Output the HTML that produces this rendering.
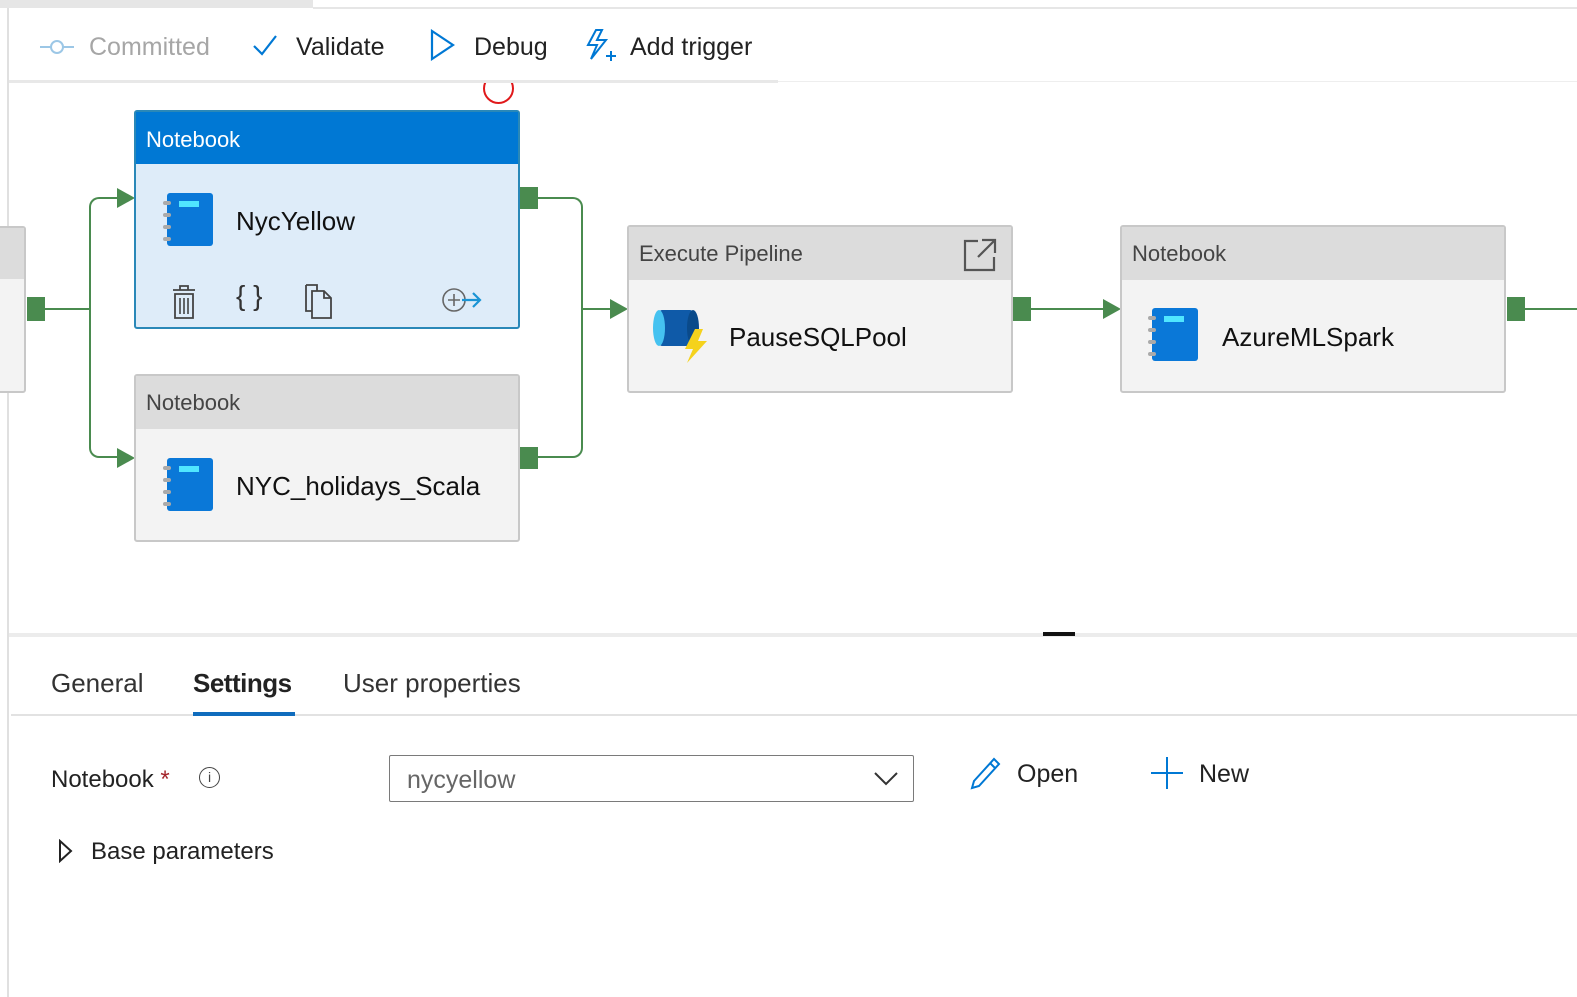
<!DOCTYPE html><html><head><style>
*{margin:0;padding:0;box-sizing:border-box}
body{width:1577px;height:997px;background:#fff;position:relative;overflow:hidden;font-family:"Liberation Sans",sans-serif;color:#222}
.a{position:absolute}
.node{position:absolute;border:2px solid #c8c8c8;border-radius:3px;background:#f3f3f3}
.hd{position:absolute;left:0;right:0;top:0;height:51px;background:#dcdcdc;font-size:22px;color:#444;padding:14px 0 0 10px}
.nm{position:absolute;font-size:26px;color:#111}
.g{position:absolute;background:#4a8b4f}
.ln{position:absolute;border-color:#4a8b4f;border-style:solid;border-width:0}
.tri{position:absolute;width:0;height:0;border-top:10px solid transparent;border-bottom:10px solid transparent;border-left:18px solid #4a8b4f}
</style></head><body>
<div class="a" style="left:0;top:0;width:313px;height:8px;background:#e6e6e6"></div>
<div class="a" style="left:313px;top:7px;width:1264px;height:2px;background:#e6e6e6"></div>
<div class="a" style="left:7px;top:8px;width:2px;height:989px;background:#e0e0e0"></div>
<div class="a" style="left:9px;top:80px;width:769px;height:3px;background:#e8e8e8"></div>
<div class="a" style="left:778px;top:81px;width:799px;height:1px;background:#eee"></div>
<!-- toolbar -->
<svg class="a" style="left:40px;top:37px" width="34" height="20"><line x1="0" y1="10" x2="34" y2="10" stroke="#9cc7e6" stroke-width="2"/><circle cx="17" cy="10" r="6" fill="#fff" stroke="#9cc7e6" stroke-width="2"/></svg>
<div class="a" style="left:89px;top:33px;font-size:25px;color:#a6a6a6">Committed</div>
<svg class="a" style="left:252px;top:34px" width="26" height="22"><path d="M2 12 L10 20 L24 2" fill="none" stroke="#0078d4" stroke-width="2.2"/></svg>
<div class="a" style="left:296px;top:33px;font-size:25px">Validate</div>
<svg class="a" style="left:430px;top:29px" width="26" height="32"><path d="M2 2 L23 16 L2 30 Z" fill="none" stroke="#0078d4" stroke-width="2.2"/></svg>
<div class="a" style="left:474px;top:33px;font-size:25px">Debug</div>
<svg class="a" style="left:584px;top:28px" width="34" height="34"><path d="M12 2 L4 17 L13 17 L7 31 L22 12 L13 12 L18 2 Z" fill="none" stroke="#0078d4" stroke-width="2"/><path d="M22 28 h10 M27 23 v10" stroke="#0078d4" stroke-width="2"/></svg>
<div class="a" style="left:630px;top:33px;font-size:25px">Add trigger</div>
<!-- red circle -->
<div class="a" style="left:483px;top:73px;width:31px;height:31px;border:2px solid #e0191b;border-radius:50%;clip-path:inset(10px 0 0 0)"></div>
<!-- left partial node -->
<div class="node" style="left:-10px;top:226px;width:36px;height:167px"><div class="hd" style="padding:0"></div></div>
<!-- connectors -->
<div class="g" style="left:27px;top:297px;width:18px;height:24px"></div>
<div class="ln" style="left:45px;top:308px;width:45px;border-top-width:2px"></div>
<div class="ln" style="left:89px;top:197px;width:30px;height:112px;border-left-width:2px;border-top-width:2px;border-radius:10px 0 0 0"></div>
<div class="ln" style="left:89px;top:308px;width:30px;height:150px;border-left-width:2px;border-bottom-width:2px;border-radius:0 0 0 10px"></div>
<div class="tri" style="left:117px;top:188px"></div>
<div class="tri" style="left:117px;top:448px"></div>
<div class="g" style="left:520px;top:187px;width:18px;height:22px"></div>
<div class="g" style="left:520px;top:447px;width:18px;height:22px"></div>
<div class="ln" style="left:538px;top:197px;width:45px;height:112px;border-right-width:2px;border-top-width:2px;border-radius:0 10px 0 0"></div>
<div class="ln" style="left:538px;top:308px;width:45px;height:150px;border-right-width:2px;border-bottom-width:2px;border-radius:0 0 10px 0"></div>
<div class="ln" style="left:582px;top:308px;width:30px;border-top-width:2px"></div>
<div class="tri" style="left:610px;top:299px"></div>
<div class="g" style="left:1013px;top:297px;width:18px;height:24px"></div>
<div class="ln" style="left:1031px;top:308px;width:75px;border-top-width:2px"></div>
<div class="tri" style="left:1103px;top:299px"></div>
<div class="g" style="left:1507px;top:297px;width:18px;height:24px"></div>
<div class="ln" style="left:1525px;top:308px;width:52px;border-top-width:2px"></div>
<!-- node1 selected -->
<div class="node" style="left:134px;top:110px;width:386px;height:219px;background:#deecf9;border-color:#2a88b8">
<div class="hd" style="background:#0078d4;color:#fff;height:52px;padding-top:15px">Notebook</div>
<div class="nm" style="left:100px;top:94px">NycYellow</div>
<svg class="a" style="left:32px;top:172px" width="32" height="36" viewBox="0 0 32 36"><path d="M5 6 h22 M12 6 v-4 h8 v4 M7 10 h18 v24 h-18 z" fill="none" stroke="#444" stroke-width="1.8"/><path d="M12 14 v16 M16 14 v16 M20 14 v16" fill="none" stroke="#444" stroke-width="1.6"/></svg>
<div class="a" style="left:100px;top:168px;font-size:28px;color:#333">{ }</div>
<svg class="a" style="left:168px;top:172px" width="32" height="36"><path d="M2 1 h11 v6 M2 1 v26 h6 M8 7 h12 l7 7 v20 h-19 z M20 7 v7 h7" fill="none" stroke="#444" stroke-width="1.8"/></svg>
<svg class="a" style="left:304px;top:174px" width="44" height="28"><circle cx="14" cy="14" r="11" fill="none" stroke="#666" stroke-width="1.6"/><path d="M8 14 h12 M14 8 v12" stroke="#666" stroke-width="1.6"/><path d="M22 14 h18 M33 7 l7 7 l-7 7" fill="none" stroke="#1a94d4" stroke-width="2.2"/></svg>
</div>
<!-- node2 -->
<div class="node" style="left:134px;top:374px;width:386px;height:168px"><div class="hd" style="height:53px">Notebook</div><div class="nm" style="left:100px;top:95px">NYC_holidays_Scala</div></div>
<!-- exec pipeline -->
<div class="node" style="left:627px;top:225px;width:386px;height:168px"><div class="hd" style="height:53px">Execute Pipeline</div><div class="nm" style="left:100px;top:95px">PauseSQLPool</div>
<svg class="a" style="left:333px;top:10px" width="36" height="36"><path d="M16 4 H3 V33 H32 V20 M20 3 H33 V16 M33 3 L16 20" fill="none" stroke="#555" stroke-width="2.2"/></svg>
<svg class="a" style="left:20px;top:80px" width="64" height="56"><rect x="10" y="3" width="34" height="36" rx="3" fill="#0f5aa8"/><ellipse cx="10" cy="21" rx="6" ry="18" fill="#45c2f0"/><ellipse cx="44" cy="21" rx="6" ry="18" fill="#0a4a8a"/><path d="M46 22 L36 42 L44 42 L38 56 L58 34 L49 34 L54 22 Z" fill="#f5d21c"/></svg>
</div>
<!-- node3 -->
<div class="node" style="left:1120px;top:225px;width:386px;height:168px"><div class="hd" style="height:53px">Notebook</div><div class="nm" style="left:100px;top:95px">AzureMLSpark</div></div>
<!-- notebook icons -->
<svg class="a" style="left:160px;top:192px" width="56" height="56"><rect x="7" y="1" width="46" height="53" rx="3" fill="#0a78d8"/><rect x="19" y="9" width="20" height="6" fill="#50e6ff"/><g fill="#aaa"><rect x="3" y="9" width="8" height="4" rx="2"/><rect x="3" y="21" width="8" height="4" rx="2"/><rect x="3" y="33" width="8" height="4" rx="2"/><rect x="3" y="45" width="8" height="4" rx="2"/></g></svg>
<svg class="a" style="left:160px;top:457px" width="56" height="56"><rect x="7" y="1" width="46" height="53" rx="3" fill="#0a78d8"/><rect x="19" y="9" width="20" height="6" fill="#50e6ff"/><g fill="#aaa"><rect x="3" y="9" width="8" height="4" rx="2"/><rect x="3" y="21" width="8" height="4" rx="2"/><rect x="3" y="33" width="8" height="4" rx="2"/><rect x="3" y="45" width="8" height="4" rx="2"/></g></svg>
<svg class="a" style="left:1147px;top:307px" width="56" height="56"><rect x="5" y="1" width="46" height="53" rx="3" fill="#0a78d8"/><rect x="17" y="9" width="20" height="6" fill="#50e6ff"/><g fill="#aaa"><rect x="1" y="9" width="8" height="4" rx="2"/><rect x="1" y="21" width="8" height="4" rx="2"/><rect x="1" y="33" width="8" height="4" rx="2"/><rect x="1" y="45" width="8" height="4" rx="2"/></g></svg>
<!-- splitter -->
<div class="a" style="left:9px;top:633px;width:1568px;height:4px;background:#ececec"></div>
<div class="a" style="left:1043px;top:632px;width:32px;height:4px;background:#111"></div>
<!-- tabs -->
<div class="a" style="left:51px;top:668px;font-size:26px;color:#333">General</div>
<div class="a" style="left:193px;top:668px;font-size:26px;color:#222;font-weight:bold;letter-spacing:-0.5px">Settings</div>
<div class="a" style="left:343px;top:668px;font-size:26px;color:#333">User properties</div>
<div class="a" style="left:11px;top:714px;width:1566px;height:2px;background:#e2e2e2"></div>
<div class="a" style="left:193px;top:712px;width:102px;height:4px;background:#0f6cbd"></div>
<!-- form -->
<div class="a" style="left:51px;top:766px;font-size:24px;color:#222">Notebook <span style="color:#a4262c">*</span></div>
<div class="a" style="left:199px;top:767px;width:21px;height:21px;border:1.5px solid #444;border-radius:50%;font-size:14px;text-align:center;line-height:18px;color:#444">i</div>
<div class="a" style="left:389px;top:755px;width:525px;height:47px;border:1.5px solid #7a7a7a;border-radius:2px"></div>
<div class="a" style="left:407px;top:766px;font-size:25px;color:#666">nycyellow</div>
<svg class="a" style="left:873px;top:771px" width="26" height="16"><path d="M2 2 L13 13 L24 2" fill="none" stroke="#333" stroke-width="2"/></svg>
<svg class="a" style="left:968px;top:755px" width="34" height="36"><path d="M6 26 L26 4 L31 9 L11 31 L4 33 Z M22 8 L27 13" fill="none" stroke="#0078d4" stroke-width="2"/></svg>
<div class="a" style="left:1017px;top:760px;font-size:25px">Open</div>
<svg class="a" style="left:1150px;top:756px" width="34" height="34"><path d="M17 1 V33 M1 17 H33" stroke="#0078d4" stroke-width="2"/></svg>
<div class="a" style="left:1199px;top:760px;font-size:25px">New</div>
<svg class="a" style="left:58px;top:839px" width="16" height="24"><path d="M2 2 L13 12 L2 22 Z" fill="none" stroke="#222" stroke-width="2"/></svg>
<div class="a" style="left:91px;top:838px;font-size:24px;color:#222">Base parameters</div>
</body></html>
